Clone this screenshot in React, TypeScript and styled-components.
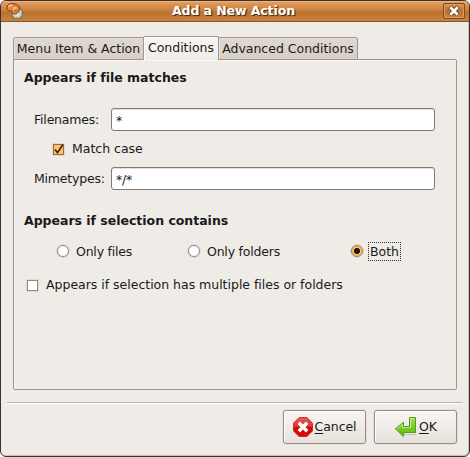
import React, { useState } from 'react';
import styled, { createGlobalStyle, css } from 'styled-components';

const GlobalStyle = createGlobalStyle`
  * { box-sizing: border-box; }
  body { margin: 0; background: #fff; overflow: hidden; }
  button, input { font: inherit; color: inherit; letter-spacing: inherit; }
`;

const Dialog = styled.div`
  width: 470px;
  height: 457px;
  display: flex;
  flex-direction: column;
  background: #efebe7;
  border: 1px solid #3b3330;
  border-radius: 6px;
  box-shadow: inset -1px -1px 0 #c9bfb7;
  overflow: hidden;
  font: 12.5px/16px 'DejaVu Sans', sans-serif;
  letter-spacing: -0.015px;
  color: #1a1a1a;
`;

const TitleBar = styled.header`
  height: 21px;
  flex: none;
  display: grid;
  grid-template-columns: 18px 1fr 22px;
  grid-template-rows: 20px;
  align-items: center;
  padding: 0 4px 0 5px;
  background: linear-gradient(#e6a165 0, #dc924f 4px, #ca7e3a 10px, #b87330 11px, #c8803b 19px);
  border-bottom: 1px solid #80562d;
  box-shadow: inset 0 1px 0 #eeb47d;
`;

const Title = styled.h1`
  margin: 0;
  font-size: 12.5px;
  line-height: 18px;
  text-align: center;
  letter-spacing: -0.08px;
  color: #fff;
  text-shadow: 1px 1px 1px #4c3216, 1px 1px 0 #6b481f;
`;

const CloseButton = styled.button`
  width: 22px;
  height: 16px;
  padding: 0;
  display: grid;
  place-items: center;
  border: 1px solid #7b4c20;
  border-radius: 2px;
  background: linear-gradient(#d8975a, #b9702d 50%, #c98543);
  box-shadow: inset 0 0 0 1px #d99a60;
`;

const Content = styled.main`
  flex: 1;
  display: flex;
  flex-direction: column;
  padding: 14px 12px 12px;
`;

const Tabs = styled.div`
  display: flex;
  align-items: flex-end;
  height: 24px;
  flex: none;
  margin-bottom: -1px;
`;

const Tab = styled.button<{ $active?: boolean; $width: number }>`
  width: ${p => p.$width}px;
  height: 23px;
  padding: 0;
  display: flex;
  align-items: center;
  justify-content: center;
  white-space: nowrap;
  border: 1px solid #a3968d;
  border-radius: 2px 2px 0 0;
  background: linear-gradient(#dfd7d1, #d9cfc9);
  box-shadow: inset 1px 1px 0 #e9e3de;
  ${p => p.$active && css`
    height: 24px;
    margin: 0 -1px;
    padding-bottom: 2px;
    z-index: 1;
    border-bottom: 0;
    background: linear-gradient(#f8f6f4, #efebe7);
    box-shadow: inset 1px 1px 0 #fff;
  `}
`;

const Panel = styled.section`
  height: 331px;
  border: 1px solid #9f9388;
  border-radius: 2px;
  box-shadow: inset 1px 1px 0 #f9f7f5;
  padding: 10px 21px 0 10px;
`;

const Heading = styled.h2<{ $top?: number }>`
  margin: ${p => p.$top ?? 0}px 0 0;
  font-size: 12.5px;
  line-height: 16px;
`;

const Field = styled.label<{ $top: number }>`
  display: grid;
  grid-template-columns: 77px 1fr;
  align-items: center;
  margin: ${p => p.$top}px 0 0 10px;
  letter-spacing: -0.2px;
`;

const Entry = styled.input`
  width: 100%;
  height: 23px;
  padding: 1px 4px 0;
  border: 1px solid #857870;
  border-radius: 3px;
  background: #fff;
  box-shadow: inset 0 1px 0 #e5e1de;
  outline: 0;
`;

const Option = styled.label<{ $indent?: number; $top?: number }>`
  display: flex;
  align-items: center;
  height: 18px;
  margin: ${p => p.$top ?? 0}px 0 0 ${p => p.$indent ?? 0}px;
  white-space: nowrap;
`;

const HiddenInput = styled.input`
  position: absolute;
  opacity: 0;
  pointer-events: none;
`;

const CheckMark = styled.span<{ $on: boolean }>`
  width: 11px;
  height: 11px;
  flex: none;
  margin-right: 8px;
  border: 1px solid ${p => (p.$on ? '#a06c35' : '#958779')};
  background: ${p => (p.$on ? '#ffc16d' : '#fff')};
  box-shadow: 0 0 0 1px #e0dad4;
  svg { display: block; margin: -2px 0 0 -1px; overflow: visible; }
`;

const RadioMark = styled.span<{ $on: boolean }>`
  width: 12px;
  height: 12px;
  flex: none;
  margin-right: 5px;
  border: 1px solid ${p => (p.$on ? '#b27534' : '#95897f')};
  border-radius: 50%;
  background: ${p => (p.$on ? 'radial-gradient(circle, #1c1a18 0 2.7px, #ffbd68 3.4px)' : '#fff')};
  box-shadow: 0 0 0 1px #ded8d3;
`;

const RadioText = styled.span<{ $focused: boolean }>`
  padding: 0 1px;
  border: 1px dotted ${p => (p.$focused ? '#333' : 'transparent')};
  line-height: 17px;
  letter-spacing: ${p => (p.$focused ? 0 : -0.2)}px;
`;

const RadioRow = styled.div`
  display: grid;
  grid-template-columns: 131px 163px 60px;
  margin: 13px 0 0 33px;
`;

const Separator = styled.hr`
  width: 456px;
  height: 2px;
  flex: none;
  border: 0;
  margin: 12px 0 6px -6px;
  background: linear-gradient(#bfb2a6 50%, #fff 50%);
`;

const Actions = styled.footer`
  display: flex;
  justify-content: flex-end;
  gap: 8px;
`;

const ActionButton = styled.button`
  width: 83px;
  height: 34px;
  padding: 0;
  display: flex;
  align-items: center;
  justify-content: center;
  gap: 2px;
  letter-spacing: -0.1px;
  border: 1px solid #968c83;
  border-radius: 3px;
  background: linear-gradient(#f7f5f3, #efebe7 50%, #e6e0da);
  box-shadow: inset 1px 1px 0 #fff, 0 0 0 1px #e5e0db;
  u { text-underline-offset: 2px; text-decoration-skip-ink: none; }
  svg { flex: none; }
`;

const ShellIcon = () => (
  <svg width="18" height="18" viewBox="0 0 18 18">
    <path d="M9 5l2.3.4L13 4l1.4 1.5L15 8l1.5 1-.5 2.2 1 1.3-1.6 1.4v2l-2-.2L12.2 17l-1.8-1-2 1-.8-2-2-.7L7 11z" fill="#c9cec3" stroke="#5d6257" strokeWidth=".9" />
    <path d="M1 5.2C1.1 1.8 6 .7 10 2.2c3.6 1.5 4.4 5.7 2.1 8.2-2.5 2.7-6.6 1.4-6.9-1.6C2.8 9.7.7 8 1 5.2z" fill="#e18a42" stroke="#803b16" strokeWidth="1" />
    <path d="M2.4 5c1-1.8 3-2.1 4.5-1.5M6.5 7.5C7.2 5.6 9.2 5.1 10.5 6.5" fill="none" stroke="#ffd39a" strokeWidth="1.3" />
    <path d="M5.4 8.6l.9-2.2M8.2 2.4l-.3 2.2M11.6 8.1c-.7 1.7-3 1.6-3.2.3" fill="none" stroke="#a84c1c" strokeWidth=".7" />
    <circle cx="12" cy="12.5" r="1.2" fill="#f3eee4" />
  </svg>
);

const CloseIcon = () => (
  <svg width="12" height="12" viewBox="0 0 12 12">
    <path d="M2 2l8 8m0-8l-8 8" stroke="#5f3711" strokeWidth="4.4" />
    <path d="M2.3 2.3l7.4 7.4m0-7.4l-7.4 7.4" stroke="#fff" strokeWidth="2.7" />
  </svg>
);

const CancelIcon = () => (
  <svg width="20" height="20" viewBox="0 0 20 20">
    <defs>
      <linearGradient id="cancelFill" x1="0" y1="0" x2="0" y2="1">
        <stop stopColor="#e35b58" /><stop offset=".5" stopColor="#dc3030" /><stop offset=".52" stopColor="#cc0508" /><stop offset="1" stopColor="#dc0b0b" />
      </linearGradient>
    </defs>
    <path d="M6.1.5h7.8l5.6 5.6v7.8l-5.6 5.6H6.1L.5 13.9V6.1z" fill="url(#cancelFill)" stroke="#c5161b" strokeWidth=".8" />
    <path d="M5.8 5.8l8.4 8.4m0-8.4l-8.4 8.4" stroke="#fff" strokeWidth="3.5" />
  </svg>
);

const EnterIcon = () => (
  <svg width="23" height="22" viewBox="0 0 23 22">
    <defs>
      <linearGradient id="enterFill" x1="0" y1="0" x2="0" y2="1">
        <stop stopColor="#a5df68" /><stop offset=".5" stopColor="#79cb2c" /><stop offset="1" stopColor="#62bd06" />
      </linearGradient>
    </defs>
    <path d="M3 15l7 6v-3h12v1H11l-2 3z" fill="#887f76" opacity=".35" />
    <path d="M15.5 1.5h6v15h-12v3.5L1.3 12.8l8.2-6.5V10.5h6z" fill="url(#enterFill)" stroke="#529c18" />
    <path d="M16.5 11.5v-9h4M2.8 12.8l5.7-4.5v3.2h8" fill="none" stroke="#caf19d" strokeWidth=".8" />
  </svg>
);

const Check = ({ on }: { on: boolean }) => (
  <CheckMark $on={on}>
    {on && <svg width="12" height="12" viewBox="0 0 12 12"><path d="M2 6.5l2.5 3.2L9.8 1.8" fill="none" stroke="#302417" strokeWidth="1.6" /></svg>}
  </CheckMark>
);

export default function App() {
  const [selection, setSelection] = useState('Both');
  const [matchCase, setMatchCase] = useState(true);
  const [multiple, setMultiple] = useState(false);
  return (
    <>
      <GlobalStyle />
      <Dialog>
        <TitleBar><ShellIcon /><Title>Add a New Action</Title><CloseButton aria-label="Close"><CloseIcon /></CloseButton></TitleBar>
        <Content>
          <Tabs>
            <Tab $width={131}>Menu Item &amp; Action</Tab>
            <Tab $active $width={76}>Conditions</Tab>
            <Tab $width={140}>Advanced Conditions</Tab>
          </Tabs>
          <Panel>
            <Heading>Appears if file matches</Heading>
            <Field $top={22}>Filenames:<Entry defaultValue="*" /></Field>
            <Option $indent={29} $top={9}>
              <HiddenInput type="checkbox" checked={matchCase} onChange={() => setMatchCase(!matchCase)} />
              <Check on={matchCase} />Match case
            </Option>
            <Field $top={9}>Mimetypes:<Entry defaultValue="*/*" /></Field>
            <Heading $top={23}>Appears if selection contains</Heading>
            <RadioRow>
              {['Only files', 'Only folders', 'Both'].map(name => (
                <Option key={name}>
                  <HiddenInput type="radio" name="selection" checked={selection === name} onChange={() => setSelection(name)} />
                  <RadioMark $on={selection === name} />
                  <RadioText $focused={selection === name}>{name}</RadioText>
                </Option>
              ))}
            </RadioRow>
            <Option $indent={3} $top={16}>
              <HiddenInput type="checkbox" checked={multiple} onChange={() => setMultiple(!multiple)} />
              <Check on={multiple} />Appears if selection has multiple files or folders
            </Option>
          </Panel>
          <Separator />
          <Actions>
            <ActionButton><CancelIcon /><span><u>C</u>ancel</span></ActionButton>
            <ActionButton><EnterIcon /><span><u>O</u>K</span></ActionButton>
          </Actions>
        </Content>
      </Dialog>
    </>
  );
}
